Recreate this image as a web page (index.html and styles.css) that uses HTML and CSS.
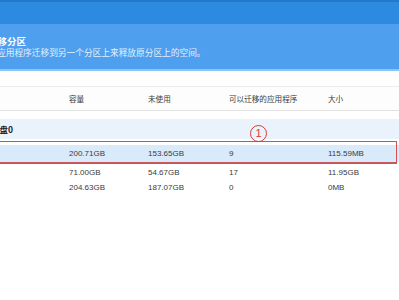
FILE: index.html
```html
<!DOCTYPE html>
<html lang="zh">
<head>
<meta charset="utf-8">
<link rel="stylesheet" href="styles.css">
</head>
<body>
<div class="titlebar"></div>
<div class="banner">
  <div class="title">迁移分区</div>
  <div class="desc">应用程序迁移到另一个分区上来释放原分区上的空间。</div>
</div>
<div class="table">
  <div class="row head">
    <div class="c0">分区</div>
    <div>容量</div>
    <div>未使用</div>
    <div>可以迁移的应用程序</div>
    <div>大小</div>
  </div>
  <div class="group"><span>磁盘0</span></div>
  <div class="row data sel">
    <div class="c0">C:</div>
    <div>200.71GB</div>
    <div>153.65GB</div>
    <div>9</div>
    <div>115.59MB</div>
  </div>
  <div class="row data">
    <div class="c0">D:</div>
    <div>71.00GB</div>
    <div>54.67GB</div>
    <div>17</div>
    <div>11.95GB</div>
  </div>
  <div class="row data">
    <div class="c0">E:</div>
    <div>204.63GB</div>
    <div>187.07GB</div>
    <div>0</div>
    <div>0MB</div>
  </div>
  <div class="mark"></div>
  <div class="num">1</div>
</div>
</body>
</html>
```
FILE: styles.css
```css
html, body {
  margin: 0;
  padding: 0;
  background: #ffffff;
  width: 399px;
  height: 300px;
  overflow: hidden;
  font-family: "Liberation Sans", "Noto Sans CJK SC", sans-serif;
}
.titlebar {
  height: 22px;
  background: #2c8ae1;
  border-top: 2px solid #2479cc;
}
.banner {
  box-sizing: border-box;
  height: 47px;
  background: #4f9fef;
  border-bottom: 2px solid #8fc4f6;
  padding-top: 11px;
}
.title {
  font-family: "Noto Sans CJK SC", sans-serif;
  font-weight: bold;
  font-size: 9.5px;
  line-height: 12px;
  color: #ffffff;
  margin-left: -12px;
}
.desc {
  font-family: "Noto Sans CJK SC", sans-serif;
  font-size: 8.7px;
  line-height: 11px;
  color: #e4f0fd;
  margin-left: -3px;
}
.table {
  position: relative;
  padding-top: 15px;
  color: #3a3a3a;
}
.row {
  display: grid;
  grid-template-columns: 69px 79px 81px 99px 1fr;
  align-items: center;
}
.c0 {
  visibility: hidden;
}
.head {
  height: 23px;
  border-top: 1px solid #ececec;
  border-bottom: 1px solid #e2e2e2;
  font-family: "Noto Sans CJK SC", sans-serif;
  font-size: 7.6px;
  background: #fdfdfd;
}
.group {
  margin-top: 8px;
  height: 20px;
  background: #eaf3fc;
  display: flex;
  align-items: center;
  font-family: "Noto Sans CJK SC", sans-serif;
  font-weight: bold;
  font-size: 8.5px;
  color: #222;
}
.group span {
  margin-left: -9px;
}
.data {
  height: 15px;
  font-size: 8px;
}
.sel {
  margin-top: 6px;
  height: 17px;
  background: #d9eafb;
  margin-bottom: 3px;
}
.mark {
  position: absolute;
  left: -4px;
  top: 70px;
  width: 401px;
  height: 23px;
  border-top: 1px solid #d65050;
  border-bottom: 2px solid #c8565a;
  border-right: 1px solid #d65050;
  box-sizing: border-box;
}
.num {
  position: absolute;
  left: 250px;
  top: 54px;
  width: 15px;
  height: 15px;
  border: 1.3px solid #d23c3c;
  border-radius: 50%;
  color: #d23c3c;
  font-size: 11px;
  line-height: 15px;
  text-align: center;
}
```
